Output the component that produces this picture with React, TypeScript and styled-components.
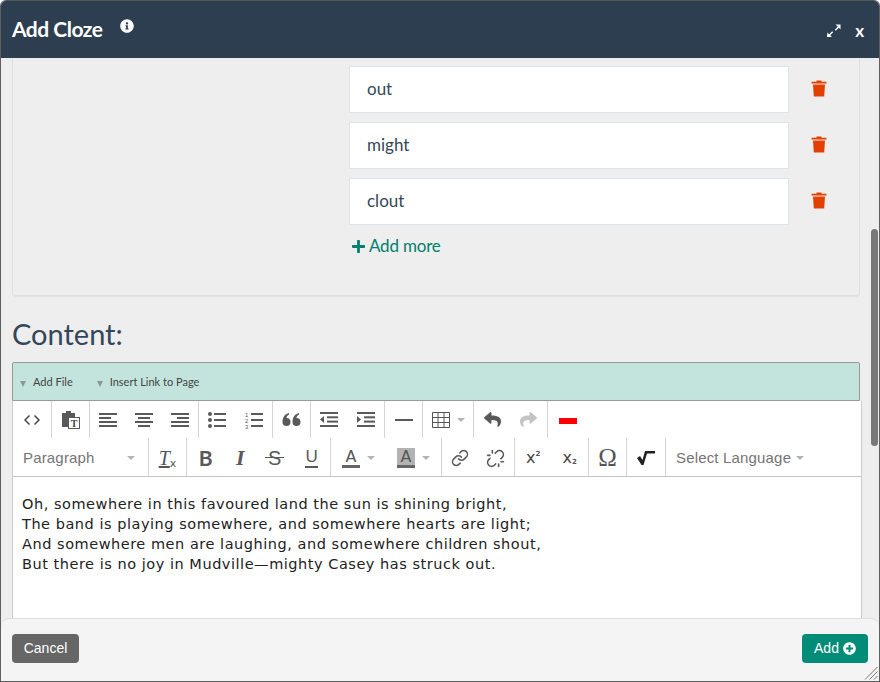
import React from "react";
import styled, { createGlobalStyle } from "styled-components";
import { FaInfoCircle, FaPlus, FaPlusCircle, FaReply, FaShare } from "react-icons/fa";
import { Link, Unlink } from "lucide-react";

const Global = createGlobalStyle`
  html, body { margin: 0; padding: 0; height: 100%; background: #fff; }
  * { box-sizing: border-box; }
`;

const Dialog = styled.div`
  position: relative;
  width: 880px;
  height: 682px;
  display: flex;
  flex-direction: column;
  border: 1px solid #5f5f5f;
  border-top-color: #555;
  border-radius: 6px 6px 0 0;
  overflow: hidden;
  background: #eeeeee;
  font-family: Lato, sans-serif;
`;
const Header = styled.header`
  flex: none;
  height: 57px;
  background: #2d3e50;
  display: flex;
  align-items: center;
  padding: 0 11px;
  color: #fff;
`;
const Title = styled.h1`
  margin: 0 0 2px;
  font: 700 21px/24px Lato, sans-serif;
  letter-spacing: -0.5px;
`;
const InfoButton = styled.span`
  display: flex;
  margin: 0 0 7px 18px;
  font-size: 14px;
`;
const HeaderActions = styled.div`
  margin-left: auto;
  display: flex;
  align-items: center;
  gap: 14px;
  padding: 3px 4px 0 0;
`;
const CloseLabel = styled.span`
  font: 700 17px/16px Lato, sans-serif;
`;
const Body = styled.main`
  flex: 1;
  min-height: 0;
  overflow: hidden;
  padding-left: 11px;
`;
const Panel = styled.section`
  width: 848px;
  height: 238px;
  border: 1px solid #dfdfdf;
  border-top: 0;
  border-radius: 0 0 4px 4px;
  box-shadow: 0 1px 1px rgba(0, 0, 0, 0.05);
  padding: 8px 0 0 336px;
`;
const OptionRow = styled.div`
  display: flex;
  align-items: center;
  height: 47px;
  margin-bottom: 9px;
`;
const OptionInput = styled.div`
  width: 440px;
  height: 47px;
  background: #fff;
  border: 1px solid #dce4ec;
  padding: 0 17px;
  font: 400 17px/43px Lato, sans-serif;
  color: #34475a;
`;
const TrashButton = styled.span`
  display: flex;
  margin: 0 0 2px 22px;
`;
const AddMore = styled.div`
  display: flex;
  align-items: center;
  gap: 3px;
  margin: 2px 0 0 2px;
  height: 24px;
  font: 400 17px/24px Lato, sans-serif;
  letter-spacing: -0.2px;
  color: #00806d;
`;
const ContentHeading = styled.h2`
  margin: 23px 0 14px 0;
  height: 29px;
  font: 400 29px/29px Lato, sans-serif;
  color: #34475a;
`;
const FileBar = styled.div`
  width: 848px;
  height: 39px;
  background: #c3e4dc;
  border: 1px solid #999;
  border-radius: 2px 2px 0 0;
  display: flex;
  align-items: center;
  padding: 0 0 0 7px;
  font: 400 11px/14px Lato, sans-serif;
  color: #444;
`;
const FileItem = styled.span`
  display: flex;
  align-items: center;
  gap: 7px;
  margin-right: 24px;
`;
const DownMark = styled.span`
  width: 0;
  height: 0;
  margin-top: 4px;
  border: 3.5px solid transparent;
  border-top: 6px solid #8a9a96;
  border-bottom: 0;
`;
const Editor = styled.div`
  width: 850px;
  height: 300px;
  background: #fff;
  border: 1px solid #ccc;
  border-top: 0;
`;
const ToolRow = styled.div<{ $h: number; $inset?: number }>`
  display: flex;
  height: ${(p) => p.$h}px;
  & > * {
    padding-top: ${(p) => p.$inset ?? 0}px;
  }
`;
const ToolGroup = styled.div<{ $w: number; $plain?: boolean }>`
  flex: none;
  width: ${(p) => p.$w}px;
  display: flex;
  align-items: center;
  justify-content: space-around;
  border-right: ${(p) => (p.$plain ? "0" : "1px solid #d4d4d4")};
`;
const ToolCell = styled.span`
  display: flex;
  align-items: center;
  justify-content: center;
  gap: 7px;
  color: #595959;
`;
const RowRule = styled.div`
  height: 1px;
  background: #c4c4c4;
`;
const SelectBox = styled.div<{ $w: number; $gap: number; $ruled?: boolean }>`
  flex: none;
  width: ${(p) => p.$w}px;
  display: flex;
  align-items: center;
  gap: ${(p) => p.$gap}px;
  padding-left: 10px;
  font: 400 15px/20px "Liberation Sans", Arial, sans-serif;
  letter-spacing: 0.17px;
  color: #757575;
  border-right: ${(p) => (p.$ruled ? "1px solid #d4d4d4" : "0")};
`;
const Caret = styled.span`
  width: 0;
  height: 0;
  border-left: 4px solid transparent;
  border-right: 4px solid transparent;
  border-top: 4px solid #b4b4b4;
`;
const BoldGlyph = styled.span`
  font: 700 21px/20px Lato, sans-serif;
  color: #595959;
`;
const ItalicGlyph = styled.span`
  font: italic 700 22px/20px "Liberation Serif", serif;
  color: #595959;
`;
const StrikeGlyph = styled.span`
  position: relative;
  font: 400 20px/20px "Liberation Sans", sans-serif;
  color: #595959;
  &::after {
    content: "";
    position: absolute;
    left: -3px;
    right: -3px;
    top: 9px;
    height: 1px;
    background: #595959;
  }
`;
const UnderGlyph = styled.span`
  font: 400 17px/18px "Liberation Sans", sans-serif;
  color: #595959;
  border-bottom: 2px solid #595959;
  padding: 0 0.5px;
`;
const ClearT = styled.span`
  font: italic 400 20px/22px "Liberation Serif", serif;
  color: #555;
  text-decoration: underline;
  text-decoration-thickness: 2px;
  text-underline-offset: 1px;
`;
const ClearX = styled.span`
  font: 400 11px/11px "DejaVu Sans", sans-serif;
  color: #555;
  align-self: flex-end;
`;
const TightCell = styled(ToolCell)`
  gap: 0;
`;
const ColorA = styled.span<{ $fill?: boolean }>`
  width: 18px;
  height: 20px;
  display: block;
  text-align: center;
  font: 400 16px/17px "DejaVu Sans", sans-serif;
  color: #555;
  background: ${(p) => (p.$fill ? "#b3b3b3" : "transparent")};
  border-bottom: 3px solid #666;
`;
const ScriptBase = styled.span`
  font: 400 16px/20px "DejaVu Sans", sans-serif;
  color: #444;
`;
const ScriptMark = styled.span<{ $low?: boolean }>`
  font: 700 7px/8px "DejaVu Sans", sans-serif;
  color: #555;
  margin: 2px 0;
  align-self: ${(p) => (p.$low ? "flex-end" : "flex-start")};
`;
const Omega = styled.span`
  font: 400 25px/24px "Liberation Serif", serif;
  color: #555;
`;
const EditorText = styled.div`
  padding: 17px 9px;
  font: 400 14.5px/20px "DejaVu Sans", Verdana, sans-serif;
  letter-spacing: 0.53px;
  color: #222;
`;
const Footer = styled.footer`
  flex: none;
  height: 63px;
  margin-top: -1px;
  position: relative;
  z-index: 1;
  background: #f4f4f4;
  border-top: 1px solid #ddd;
  border-radius: 8px 8px 0 0;
  display: flex;
  align-items: center;
  justify-content: space-between;
  padding: 0 11px 4px;
`;
const ActionButton = styled.button<{ $primary?: boolean }>`
  height: 29px;
  border: 0;
  border-radius: 4px;
  padding: 0;
  width: ${(p) => (p.$primary ? 66 : 67)}px;
  background: ${(p) => (p.$primary ? "#008c76" : "#666")};
  color: #fff;
  font: 400 14px/20px "Liberation Sans", Arial, sans-serif;
  display: flex;
  align-items: center;
  justify-content: center;
  gap: 4px;
`;
const ScrollThumb = styled.div`
  position: absolute;
  right: 1px;
  top: 228px;
  width: 7px;
  height: 217px;
  border-radius: 4px;
  background: #787878;
  z-index: 2;
`;
const ResizeGrip = styled.svg`
  position: absolute;
  right: 1px;
  bottom: 1px;
  z-index: 3;
`;
const Art = styled.svg`
  display: block;
  fill: #595959;
`;

const Trash = () => (
  <svg width="16" height="17" viewBox="0 0 16 17" style={{ display: "block" }}>
    <path fill="#e24000" d="M5.500 0.500h5v1.200h5v1.800H.5V1.700h5zM2 4.500h12l-.8 12H2.800z" />
    <path fill="#f49a78" d="M2 4h12v.7H2z" />
  </svg>
);
const Expand = () => (
  <svg width="14" height="14" viewBox="0 0 14 14" style={{ display: "block" }}>
    <path fill="#fff" d="M8.500 .5h5v5l-1.700-1.700-3 3-1-1 3-3zM.5 8.500l1.700 1.700 3-3 1 1-3 3 1.700 1.700h-5z" />
  </svg>
);
const Code = () => (
  <Art width="16" height="12" viewBox="0 0 16 12" style={{ fill: "none" }}>
    <path stroke="#444" strokeWidth="1.500" fill="none" d="M5.500 1.500L1 6l4.500 4.500M10.500 1.500L15 6l-4.500 4.500" />
  </Art>
);
const Paste = () => (
  <Art width="18" height="19" viewBox="0 0 18 19">
    <path d="M0 3h4V1h5v2h4v4H6v10H0z" />
    <rect x="6.500" y="7.500" width="11" height="11" fill="#fff" stroke="#595959" />
    <text x="12" y="16.500" fontSize="10" fontWeight="700" textAnchor="middle" fontFamily="Liberation Serif" fill="#444">T</text>
  </Art>
);
const lines = (rows: [number, number][]) => rows.map(([x, w], i) => <rect key={i} x={x} y={i * 4} width={w} height="2" />);
const AlignL = () => <Art width="18" height="14" viewBox="0 0 18 14">{lines([[0, 18], [0, 12], [0, 18], [0, 18]])}</Art>;
const AlignC = () => <Art width="18" height="14" viewBox="0 0 18 14">{lines([[0, 18], [3, 12], [0, 18], [3, 12]])}</Art>;
const AlignR = () => <Art width="18" height="14" viewBox="0 0 18 14">{lines([[0, 18], [6, 12], [0, 18], [0, 18]])}</Art>;
const Bullets = () => (
  <Art width="18" height="16" viewBox="0 0 18 16">
    <circle cx="2" cy="2" r="2" /><circle cx="2" cy="8" r="2" /><circle cx="2" cy="14" r="2" />
    <rect x="6" y="1" width="12" height="2" /><rect x="6" y="7" width="12" height="2" /><rect x="6" y="13" width="12" height="2" />
  </Art>
);
const Numbers = () => (
  <Art width="18" height="18" viewBox="0 0 18 18">
    <text x="0" y="5.500" fontSize="6" fontFamily="Liberation Sans">1</text>
    <text x="0" y="11.500" fontSize="6" fontFamily="Liberation Sans">2</text>
    <text x="0" y="17.500" fontSize="6" fontFamily="Liberation Sans">3</text>
    <rect x="6" y="2" width="12" height="2" /><rect x="6" y="8" width="12" height="2" /><rect x="6" y="14" width="12" height="2" />
  </Art>
);
const Quote = () => (
  <Art width="19" height="13" viewBox="0 0 19 13">
    <path d="M4.500 5a4 4 0 1 1-4 4C.5 4 3 1 7 0v1.500C5.500 2.300 4.500 3.500 4.500 5zM14.500 5a4 4 0 1 1-4 4c0-5 2.500-8 6.500-9v1.500c-1.500.8-2.500 2-2.500 3.500z" />
  </Art>
);
const Outdent = () => (
  <Art width="18" height="15" viewBox="0 0 18 15">
    <rect width="18" height="2" /><rect x="7" y="4.300" width="11" height="2" /><rect x="7" y="8.600" width="11" height="2" /><rect y="13" width="18" height="2" />
    <path d="M4 4v7L0 7.500z" />
  </Art>
);
const Indent = () => (
  <Art width="18" height="15" viewBox="0 0 18 15">
    <rect width="18" height="2" /><rect x="7" y="4.300" width="11" height="2" /><rect x="7" y="8.600" width="11" height="2" /><rect y="13" width="18" height="2" />
    <path d="M0 4v7l4-3.500z" />
  </Art>
);
const Rule = () => <Art width="18" height="2" viewBox="0 0 18 2"><rect width="18" height="2" /></Art>;
const Table = () => (
  <svg width="18" height="16" viewBox="0 0 18 16" style={{ display: "block" }}>
    <path fill="none" stroke="#555" d="M.5.5h17v15H.5zM.5 5.500h17M.5 10.500h17M6 .5v15M12 .5v15" />
  </svg>
);
const RedBar = () => (
  <svg width="18" height="6" viewBox="0 0 18 6" style={{ display: "block", marginTop: 2 }}>
    <rect width="18" height="6" fill="#f00" />
  </svg>
);
const Sqrt = () => (
  <Art width="18" height="16" viewBox="0 0 18 16" style={{ fill: "#222" }}>
    <path d="M0 8l3-2 2.500 4L8 1h10v2.500H10L6.500 15H4.500z" />
  </Art>
);

export default function App() {
  return (
    <>
      <Global />
      <Dialog>
        <Header>
          <Title>Add Cloze</Title>
          <InfoButton><FaInfoCircle /></InfoButton>
          <HeaderActions>
            <Expand />
            <CloseLabel>x</CloseLabel>
          </HeaderActions>
        </Header>
        <Body>
          <Panel>
            {["out", "might", "clout"].map((w) => (
              <OptionRow key={w}>
                <OptionInput>{w}</OptionInput>
                <TrashButton><Trash /></TrashButton>
              </OptionRow>
            ))}
            <AddMore><FaPlus size={15} />Add more</AddMore>
          </Panel>
          <ContentHeading>Content:</ContentHeading>
          <FileBar>
            <FileItem><DownMark />Add File</FileItem>
            <FileItem><DownMark />Insert Link to Page</FileItem>
          </FileBar>
          <Editor>
            <ToolRow $h={37}>
              <ToolGroup $w={39}><ToolCell><Code /></ToolCell></ToolGroup>
              <ToolGroup $w={38}><ToolCell><Paste /></ToolCell></ToolGroup>
              <ToolGroup $w={109}>
                <ToolCell><AlignL /></ToolCell><ToolCell><AlignC /></ToolCell><ToolCell><AlignR /></ToolCell>
              </ToolGroup>
              <ToolGroup $w={74}><ToolCell><Bullets /></ToolCell><ToolCell><Numbers /></ToolCell></ToolGroup>
              <ToolGroup $w={38}><ToolCell><Quote /></ToolCell></ToolGroup>
              <ToolGroup $w={74}><ToolCell><Outdent /></ToolCell><ToolCell><Indent /></ToolCell></ToolGroup>
              <ToolGroup $w={38}><ToolCell><Rule /></ToolCell></ToolGroup>
              <ToolGroup $w={51}><ToolCell><Table /><Caret /></ToolCell></ToolGroup>
              <ToolGroup $w={74}>
                <ToolCell><FaReply size={17} /></ToolCell>
                <ToolCell style={{ color: "#c4c4c4" }}><FaShare size={17} /></ToolCell>
              </ToolGroup>
              <ToolGroup $w={40} $plain><ToolCell><RedBar /></ToolCell></ToolGroup>
            </ToolRow>
            <ToolRow $h={38} $inset={2}>
              <SelectBox $w={136} $gap={32} $ruled>Paragraph<Caret /></SelectBox>
              <ToolGroup $w={38}>
                <TightCell><ClearT>T</ClearT><ClearX>x</ClearX></TightCell>
              </ToolGroup>
              <ToolGroup $w={144}>
                <ToolCell><BoldGlyph>B</BoldGlyph></ToolCell>
                <ToolCell><ItalicGlyph>I</ItalicGlyph></ToolCell>
                <ToolCell><StrikeGlyph>S</StrikeGlyph></ToolCell>
                <ToolCell><UnderGlyph>U</UnderGlyph></ToolCell>
              </ToolGroup>
              <ToolGroup $w={111}>
                <ToolCell><ColorA>A</ColorA><Caret /></ToolCell>
                <ToolCell><ColorA $fill>A</ColorA><Caret /></ToolCell>
              </ToolGroup>
              <ToolGroup $w={73}>
                <ToolCell><Link size={18} strokeWidth={2} /></ToolCell>
                <ToolCell><Unlink size={19} strokeWidth={2} /></ToolCell>
              </ToolGroup>
              <ToolGroup $w={74}>
                <TightCell><ScriptBase>x</ScriptBase><ScriptMark>2</ScriptMark></TightCell>
                <TightCell><ScriptBase>x</ScriptBase><ScriptMark $low>2</ScriptMark></TightCell>
              </ToolGroup>
              <ToolGroup $w={38}><ToolCell><Omega>Ω</Omega></ToolCell></ToolGroup>
              <ToolGroup $w={39}><ToolCell><Sqrt /></ToolCell></ToolGroup>
              <SelectBox $w={160} $gap={5}>Select Language<Caret /></SelectBox>
            </ToolRow>
            <RowRule />
            <EditorText>
              Oh, somewhere in this favoured land the sun is shining bright,<br />
              The band is playing somewhere, and somewhere hearts are light;<br />
              And somewhere men are laughing, and somewhere children shout,<br />
              But there is no joy in Mudville—mighty Casey has struck out.
            </EditorText>
          </Editor>
        </Body>
        <Footer>
          <ActionButton>Cancel</ActionButton>
          <ActionButton $primary>Add <FaPlusCircle size={13} /></ActionButton>
        </Footer>
        <ScrollThumb />
        <ResizeGrip width="14" height="14" viewBox="0 0 14 14">
          <path stroke="#777" d="M13.500 1L1 13.500M13.500 5.500L5.500 13.500M13.500 10L10 13.500" fill="none" />
        </ResizeGrip>
      </Dialog>
    </>
  );
}
